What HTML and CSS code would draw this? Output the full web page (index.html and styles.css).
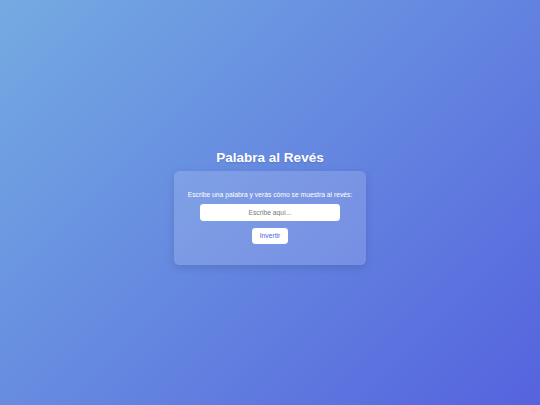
FILE: index.html
```html
<!DOCTYPE html>
<html lang="es">
<head>
<meta charset="utf-8">
<title>Palabra al Revés</title>
<link rel="stylesheet" href="styles.css">
</head>
<body>
<main class="page">
  <h1 class="title">Palabra al Revés</h1>
  <section class="card">
    <p class="hint">Escribe una palabra y verás cómo se muestra al revés:</p>
    <input class="word" type="text" placeholder="Escribe aquí...">
    <button class="btn" type="button">Invertir</button>
    <div class="result"></div>
  </section>
</main>
</body>
</html>
```
FILE: styles.css
```css
html, body {
  margin: 0;
  height: 100%;
}
body {
  background: linear-gradient(135deg, #74ABE2, #5563DE);
  font-family: "Liberation Sans", Arial, sans-serif;
  color: #fff;
}
.page {
  height: 100%;
  display: flex;
  flex-direction: column;
  align-items: center;
  justify-content: center;
}
.title {
  font-size: 13.5px;
  font-weight: bold;
  margin: 9.8px 0 5.7px;
  text-shadow: 0 1px 2px rgba(0,0,0,0.15);
}
.card {
  box-sizing: border-box;
  width: 191.5px;
  height: 94px;
  padding: 13.5px 13.5px 0;
  background: rgba(255,255,255,0.15);
  border-radius: 5.5px;
  box-shadow: 0 3px 8px rgba(0,0,0,0.12);
  display: flex;
  flex-direction: column;
  align-items: center;
}
.hint {
  font-size: 6.75px;
  margin: 6.75px 0 6.5px;
  white-space: nowrap;
}
.word {
  box-sizing: border-box;
  width: 140px;
  height: 17px;
  border: none;
  border-radius: 3.4px;
  padding: 0 6px;
  font-family: inherit;
  font-size: 6.75px;
  text-align: center;
  background: #fff;
  outline: none;
}
.word::placeholder {
  color: #777;
}
.btn {
  box-sizing: border-box;
  margin-top: 6.5px;
  width: 36.5px;
  height: 16px;
  border: none;
  border-radius: 3.4px;
  background: #fff;
  color: #5563DE;
  font-family: inherit;
  font-size: 6.75px;
  padding: 0;
}
```
